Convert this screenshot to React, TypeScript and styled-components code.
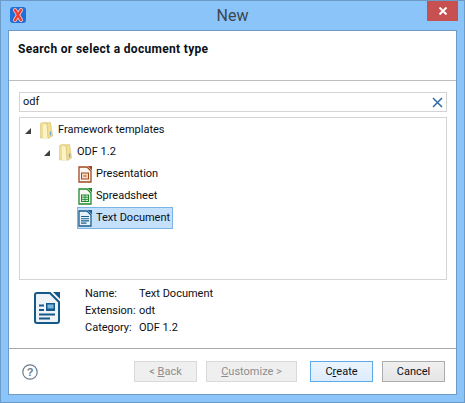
import React from "react";
import styled, { createGlobalStyle } from "styled-components";

// ______________________________________________________
// page

const GlobalStyle = createGlobalStyle`
  html, body { margin: 0; padding: 0; background: #8ac4f8; }
  body { font-family: Roboto, "Liberation Sans", sans-serif; font-size: 11px; color: #0a1018; }
`;

const Window = styled.div`
  box-sizing: border-box;
  width: 465px;
  height: 403px;
  display: flex;
  flex-direction: column;
  background: #8ac4f8;
  border: 1px solid #6c9bc8;
`;

const TitleBar = styled.div`
  height: 29px;
  flex: none;
  display: flex;
  align-items: flex-start;
  position: relative;
  padding-left: 9px;
`;

const AppIcon = styled.svg`
  width: 16px;
  height: 16px;
  margin-top: 6px;
`;

const WindowTitle = styled.div`
  position: absolute;
  left: 0;
  right: 0;
  top: 5px;
  text-align: center;
  font-size: 16px;
  line-height: 20px;
  color: #3c4650;
`;

const CloseButton = styled.div`
  position: absolute;
  right: 6px;
  top: 0;
  width: 31px;
  height: 20px;
  background: #c75050;
  display: flex;
  align-items: center;
  justify-content: center;
`;

const Body = styled.div`
  flex: 1;
  margin: 0 7px 7px 7px;
  background: #fff;
  border: 1px solid #6c9bc8;
  display: flex;
  flex-direction: column;
  min-height: 0;
`;

const Banner = styled.div`
  height: 49px;
  flex: none;
  padding: 0 9px;
  border-bottom: 1px solid #bdbdbd;
  font-weight: 700;
  font-size: 12px;
  letter-spacing: 0.32px;
  line-height: 16px;
`;

const BannerText = styled.div`
  padding-top: 10px;
`;

const Main = styled.div`
  flex: 1;
  display: flex;
  flex-direction: column;
  padding: 11px 10px 0 10px;
  min-height: 0;
`;

const SearchBox = styled.div`
  box-sizing: border-box;
  height: 20px;
  width: 428px;
  border: 1px solid #d4d4d4;
  display: flex;
  align-items: center;
  justify-content: space-between;
  padding: 0 3px;
  line-height: 16px;
`;

const Tree = styled.div`
  box-sizing: border-box;
  width: 428px;
  height: 163px;
  margin-top: 5px;
  padding-top: 1px;
  border: 1px solid #d4d4d4;
  display: flex;
  flex-direction: column;
`;

const Row = styled.div<{ $depth: number }>`
  height: 22px;
  display: flex;
  align-items: center;
  padding-left: ${(p) => p.$depth}px;
  line-height: 16px;
  white-space: nowrap;
`;

const Arrow = styled.svg`
  width: 6px;
  height: 6px;
  margin-right: 9px;
  margin-top: 2px;
`;

const FolderIcon = styled.svg`
  width: 13px;
  height: 17px;
  margin-right: 5px;
`;

const RowLabel = styled.span<{ $selected?: boolean }>`
  display: flex;
  align-items: center;
  height: 22px;
  box-sizing: border-box;
  ${(p) =>
    p.$selected
      ? `background: #c4e0fa; border: 1px solid #7db4e6; margin-left: -1px; padding-right: 2px;`
      : ""}
`;

const DocIcon = styled.svg`
  width: 14px;
  height: 17px;
  margin-right: 4px;
`;

const Details = styled.div`
  flex: 1;
  display: flex;
  padding: 5px 0 0 15px;
`;

const BigIcon = styled.svg`
  width: 26px;
  height: 32px;
  margin-top: 7px;
  flex: none;
`;

const InfoGrid = styled.div`
  margin-left: 25px;
  display: grid;
  grid-template-columns: 54px auto;
  grid-auto-rows: 17px;
  line-height: 17px;
`;

const Footer = styled.div`
  height: 46px;
  flex: none;
  border-top: 1px solid #a8a8a8;
  display: flex;
  align-items: center;
  padding: 0 11px 0 13px;
  box-sizing: border-box;
`;

const HelpIcon = styled.svg`
  width: 16px;
  height: 16px;
  margin-right: auto;
`;

const Button = styled.div<{ $width: number; $kind?: "disabled" | "default" }>`
  box-sizing: border-box;
  width: ${(p) => p.$width}px;
  height: 21px;
  margin-left: 9px;
  padding-top: 1px;
  display: flex;
  align-items: center;
  justify-content: center;
  line-height: 16px;
  white-space: pre;
  border: 1px solid
    ${(p) => (p.$kind === "disabled" ? "#d9d9d9" : p.$kind === "default" ? "#5fa8ec" : "#acacac")};
  color: ${(p) => (p.$kind === "disabled" ? "#8d8d8d" : "#0a1018")};
  background: ${(p) =>
    p.$kind === "disabled"
      ? "#efefef"
      : p.$kind === "default"
      ? "linear-gradient(#ecf4fc, #dcecfc)"
      : "linear-gradient(#f0f0f0, #e5e5e5)"};
`;

const CreateGap = styled.div`
  width: 4px;
`;

// ______________________________________________________
// drawings

const Folder = () => (
  <FolderIcon viewBox="0 0 13 17">
    <path d="M0.5 1.5 L3 0.5 H7 V16 H0.5 Z" fill="#f0de96" stroke="#d8c27a" strokeWidth="0.6" />
    <path d="M3 2.5 H7.5 V16 H3 Z" fill="#fdf4c4" />
    <path d="M7 1 L10.5 0.5 L12.5 14 L8 16.5 Z" fill="#f2df92" stroke="#d0b96a" strokeWidth="0.6" />
    <rect x="9.8" y="9.5" width="1.4" height="4" fill="#6fb0e0" />
  </FolderIcon>
);

const Doc = ({ color, kind }: { color: string; kind: "pres" | "calc" | "text" }) => (
  <DocIcon viewBox="0 0 14 17">
    <path
      d="M1 1 H9 L13 5 V16 H1 Z"
      fill={kind === "text" ? "#e6f0f8" : "#faf7f2"}
      stroke={color}
      strokeWidth="1.3"
    />
    <path d="M9.6 0 H14 V4.4 Z" fill={color} />
    {kind === "pres" && (
      <>
        <rect x="3.5" y="7" width="7" height="6" fill="#f6d9c0" stroke={color} />
        <path d="M5.5 10 H8.5" stroke={color} />
      </>
    )}
    {kind === "calc" && (
      <>
        <rect x="3.5" y="7" width="7" height="6.5" fill="#d8f0d8" stroke={color} />
        <path d="M3.5 9.2 H10.5 M3.5 11.4 H10.5 M7 7 V13.5" stroke={color} strokeWidth="0.9" />
      </>
    )}
    {kind === "text" && (
      <path d="M3 6.5 H11 M3 8.7 H11 M3 10.9 H11 M3 13.1 H8.5" stroke={color} strokeWidth="1.1" />
    )}
  </DocIcon>
);

// ______________________________________________________
// component

const App = () => (
  <>
    <GlobalStyle />
    <Window>
      <TitleBar>
        <AppIcon viewBox="0 0 16 16">
          <rect width="16" height="16" rx="3" fill="#1f6fd6" />
          <path d="M5 3 L11 13 M11 3 L5 13" stroke="#ffc8c0" strokeWidth="4" strokeLinecap="round" />
          <path d="M5 3 L11 13 M11 3 L5 13" stroke="#ee3a30" strokeWidth="2.4" strokeLinecap="round" />
        </AppIcon>
        <WindowTitle>New</WindowTitle>
        <CloseButton>
          <svg width="8" height="8" viewBox="0 0 8 8">
            <path d="M0.5 0.5 L7.5 7.5 M7.5 0.5 L0.5 7.5" stroke="#fff" strokeWidth="2" />
          </svg>
        </CloseButton>
      </TitleBar>
      <Body>
        <Banner>
          <BannerText>Search or select a document type</BannerText>
        </Banner>
        <Main>
          <SearchBox>
            <span>odf</span>
            <svg width="11" height="11" viewBox="0 0 11 11">
              <path d="M1 1 L10 10 M10 1 L1 10" stroke="#2f6aa8" strokeWidth="1.5" />
            </svg>
          </SearchBox>
          <Tree>
            <Row $depth={5}>
              <Arrow viewBox="0 0 6 6"><path d="M6 0 V6 H0 Z" fill="#404040" /></Arrow>
              <Folder />
              <RowLabel>Framework templates</RowLabel>
            </Row>
            <Row $depth={24}>
              <Arrow viewBox="0 0 6 6"><path d="M6 0 V6 H0 Z" fill="#404040" /></Arrow>
              <Folder />
              <RowLabel>ODF 1.2</RowLabel>
            </Row>
            <Row $depth={58}>
              <Doc color="#a0491e" kind="pres" />
              <RowLabel>Presentation</RowLabel>
            </Row>
            <Row $depth={58}>
              <Doc color="#1f8a2e" kind="calc" />
              <RowLabel>Spreadsheet</RowLabel>
            </Row>
            <Row $depth={58}>
              <RowLabel $selected>
                <Doc color="#1b5f8f" kind="text" />
                Text Document
              </RowLabel>
            </Row>
          </Tree>
          <Details>
            <BigIcon viewBox="0 0 26 32">
              <path d="M1 3 Q1 1 3 1 H16 L25 10 V29 Q25 31 23 31 H3 Q1 31 1 29 Z" fill="#eef3f7" stroke="#15598a" strokeWidth="2" />
              <path d="M19 0 H26 V7 Z" fill="#15598a" />
              <path d="M5 13.5 H10 M5 18 H10 M5 22.5 H21 M5 26.5 H16" stroke="#15598a" strokeWidth="2" />
              <rect x="12" y="11" width="9" height="8" fill="#15598a" />
              <rect x="13.5" y="12.5" width="6" height="4" fill="#7fb6dc" />
            </BigIcon>
            <InfoGrid>
              <span>Name:</span><span>Text Document</span>
              <span>Extension:</span><span>odt</span>
              <span>Category:</span><span>ODF 1.2</span>
            </InfoGrid>
          </Details>
        </Main>
        <Footer>
          <HelpIcon viewBox="0 0 16 16">
            <circle cx="8" cy="8" r="7.2" fill="none" stroke="#6b7b8c" strokeWidth="1.2" />
            <text x="8" y="12" textAnchor="middle" fontSize="11" fontWeight="700" fill="#6b7b8c" fontFamily="Liberation Sans">?</text>
          </HelpIcon>
          <Button $width={63} $kind="disabled">{"< "}<u>B</u>ack</Button>
          <Button $width={91} $kind="disabled"><u>C</u>ustomize &gt;</Button>
          <CreateGap />
          <Button $width={63} $kind="default">C<u>r</u>eate</Button>
          <Button $width={63}>Cancel</Button>
        </Footer>
      </Body>
    </Window>
  </>
);

export default App;
